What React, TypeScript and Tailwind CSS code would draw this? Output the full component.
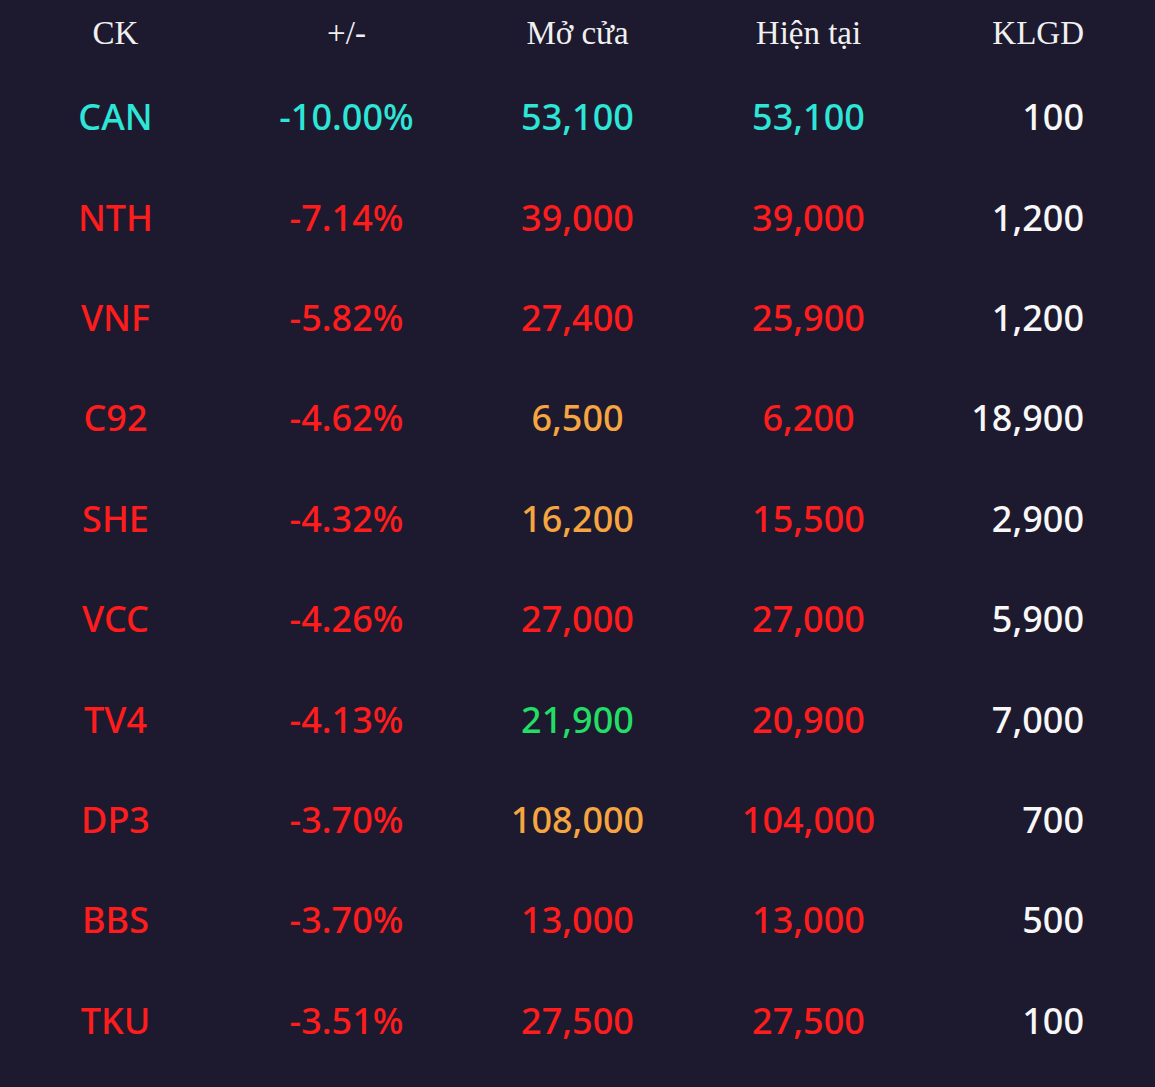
import React from 'react';

type Tone = 'ceil' | 'down' | 'ref' | 'up';

const toneClass: Record<Tone, string> = {
    ceil: 'text-[#2ee6d8]',
    down: 'text-[#ff1c1c]',
    ref: 'text-[#f6a540]',
    up: 'text-[#22dd66]',
};

type Row = {
    code: string;
    change: string;
    codeTone: Tone;
    open: string;
    openTone: Tone;
    current: string;
    volume: string;
};

const rows: Row[] = [
    { code: 'CAN', change: '-10.00%', codeTone: 'ceil', open: '53,100', openTone: 'ceil', current: '53,100', volume: '100' },
    { code: 'NTH', change: '-7.14%', codeTone: 'down', open: '39,000', openTone: 'down', current: '39,000', volume: '1,200' },
    { code: 'VNF', change: '-5.82%', codeTone: 'down', open: '27,400', openTone: 'down', current: '25,900', volume: '1,200' },
    { code: 'C92', change: '-4.62%', codeTone: 'down', open: '6,500', openTone: 'ref', current: '6,200', volume: '18,900' },
    { code: 'SHE', change: '-4.32%', codeTone: 'down', open: '16,200', openTone: 'ref', current: '15,500', volume: '2,900' },
    { code: 'VCC', change: '-4.26%', codeTone: 'down', open: '27,000', openTone: 'down', current: '27,000', volume: '5,900' },
    { code: 'TV4', change: '-4.13%', codeTone: 'down', open: '21,900', openTone: 'up', current: '20,900', volume: '7,000' },
    { code: 'DP3', change: '-3.70%', codeTone: 'down', open: '108,000', openTone: 'ref', current: '104,000', volume: '700' },
    { code: 'BBS', change: '-3.70%', codeTone: 'down', open: '13,000', openTone: 'down', current: '13,000', volume: '500' },
    { code: 'TKU', change: '-3.51%', codeTone: 'down', open: '27,500', openTone: 'down', current: '27,500', volume: '100' },
];

const App = () => {
    return (
        <div className="min-h-[1087px] w-full bg-[#1d1a2f] pb-4">
            {/* Header */}
            <div className="grid h-[67px] grid-cols-5 items-center font-['Liberation_Serif',serif] text-[33px] leading-none text-[#f0f0f0]">
                <div className="text-center">CK</div>
                <div className="text-center">+/-</div>
                <div className="text-center">Mở cửa</div>
                <div className="text-center">Hiện tại</div>
                <div className="pr-[71px] text-right">KLGD</div>
            </div>

            {/* Rows */}
            {rows.map((row) => (
                <div
                    key={row.code}
                    className="grid h-[100.4px] grid-cols-5 items-center font-['Noto_Sans',sans-serif] text-[36px] font-medium leading-none"
                >
                    <div className={`text-center ${toneClass[row.codeTone]}`}>{row.code}</div>
                    <div className={`text-center ${toneClass[row.codeTone]}`}>{row.change}</div>
                    <div className={`text-center ${toneClass[row.openTone]}`}>{row.open}</div>
                    <div className={`text-center ${toneClass[row.codeTone]}`}>{row.current}</div>
                    <div className="pr-[71px] text-right text-[#f7f7f7]">{row.volume}</div>
                </div>
            ))}
        </div>
    );
};

export default App;
